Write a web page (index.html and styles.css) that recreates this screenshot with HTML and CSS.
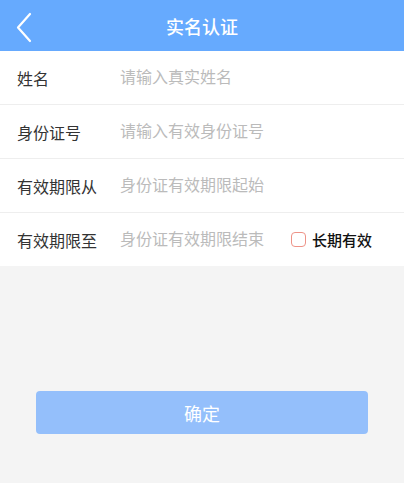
FILE: index.html
```html
<!DOCTYPE html>
<html lang="zh-CN">

<head>
    <meta charset="UTF-8">
    <meta name="viewport" content="width=device-width, initial-scale=1.0">
    <title>实名认证</title>
    <link rel="stylesheet" href="styles.css">
</head>

<body>
    <header class="nav-bar">
        <a class="nav-back" href="#">
            <svg width="20" height="32" viewBox="0 0 20 32">
                <polyline points="15,3 3,16.5 15,30" fill="none" stroke="#fff" stroke-width="2.2" stroke-linecap="round" stroke-linejoin="round"/>
            </svg>
        </a>
        <h1 class="nav-title">实名认证</h1>
    </header>
    <form class="auth-form">
        <div class="form-row">
            <label class="form-label" for="name">姓名</label>
            <input class="form-input" type="text" id="name" placeholder="请输入真实姓名">
        </div>
        <div class="form-row">
            <label class="form-label" for="idNo">身份证号</label>
            <input class="form-input" type="text" id="idNo" placeholder="请输入有效身份证号">
        </div>
        <div class="form-row">
            <label class="form-label" for="validFrom">有效期限从</label>
            <input class="form-input" type="text" id="validFrom" placeholder="身份证有效期限起始">
        </div>
        <div class="form-row">
            <label class="form-label" for="validTo">有效期限至</label>
            <input class="form-input form-input-short" type="text" id="validTo" placeholder="身份证有效期限结束">
            <label class="long-term">
                <span class="check-box"></span>
                <span>长期有效</span>
            </label>
        </div>
        <div class="form-actions">
            <button type="submit" class="submit-btn">确定</button>
        </div>
    </form>
</body>

</html>
```

FILE: styles.css
```css
* {
    box-sizing: border-box;
}
body {
    margin: 0;
    background-color: #f4f4f4;
    font-family: "Liberation Sans", "Noto Sans CJK SC", sans-serif;
    color: #333;
}
.nav-bar {
    position: relative;
    height: 51px;
    background-color: #66aafe;
    display: flex;
    align-items: center;
    justify-content: center;
}
.nav-back {
    position: absolute;
    left: 15px;
    top: 11px;
    display: block;
    width: 20px;
    height: 32px;
}
.nav-title {
    margin: 0;
    font-size: 18px;
    font-weight: 500;
    color: #fff;
}
.auth-form {
    margin: 0;
}
.form-row {
    height: 54px;
    display: flex;
    align-items: center;
    padding-left: 17px;
    background-color: #fff;
    border-bottom: 1px solid #eeeeee;
}
.form-row:nth-child(4) {
    border-bottom: none;
    height: 53px;
}
.form-label {
    width: 103px;
    flex-shrink: 0;
    font-size: 16px;
    color: #333;
}
.form-input {
    flex: 1;
    min-width: 0;
    border: none;
    outline: none;
    padding: 0;
    font-family: inherit;
    font-size: 16px;
    color: #333;
    background: transparent;
}
.form-input::placeholder {
    color: #bbbbbb;
}
.form-input-short {
    flex: none;
    width: 171px;
}
.long-term {
    display: flex;
    align-items: center;
    font-size: 15px;
    font-weight: 500;
    color: #111;
}
.check-box {
    width: 15px;
    height: 15px;
    border: 1px solid #ee9388;
    border-radius: 4px;
    margin-right: 6px;
    background: #fff;
}
.form-actions {
    padding: 125px 36px 0;
}
.submit-btn {
    width: 100%;
    height: 43px;
    border: none;
    border-radius: 4px;
    background-color: #94bffb;
    color: #fff;
    font-family: inherit;
    font-size: 18px;
    cursor: pointer;
}
```
